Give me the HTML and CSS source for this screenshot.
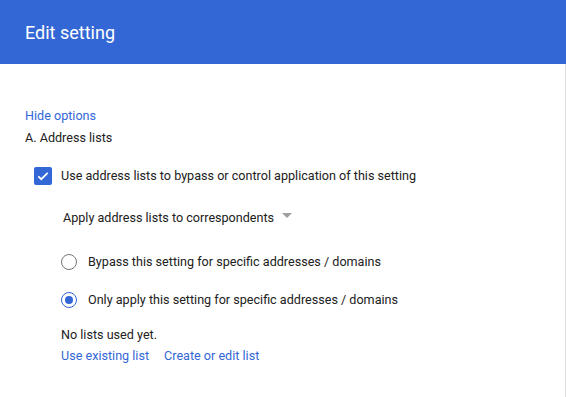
FILE: index.html
```html
<!DOCTYPE html>
<html lang="en">
<head>
  <meta charset="UTF-8">
  <title>Edit setting</title>
  <link rel="stylesheet" href="styles.css">
</head>
<body>
  <div class="header">
    <h1>Edit setting</h1>
  </div>

  <div class="content">
    <a class="link" href="#">Hide options</a>
    <div class="section-title">A. Address lists</div>

    <!-- checkbox -->
    <label class="check-row">
      <span class="checkbox">
        <svg width="14" height="14" viewBox="0 0 24 24"><path d="M4 12.5l5 5L20 6.5" fill="none" stroke="#fff" stroke-width="3"/></svg>
      </span>
      <span>Use address lists to bypass or control application of this setting</span>
    </label>

    <div class="dropdown">
      <span>Apply address lists to correspondents</span>
      <span class="caret"></span>
    </div>

    <!-- radio buttons -->
    <div class="radios">
      <label class="radio-row">
        <span class="radio"></span>
        <span>Bypass this setting for specific addresses / domains</span>
      </label>
      <label class="radio-row">
        <span class="radio on"></span>
        <span>Only apply this setting for specific addresses / domains</span>
      </label>
    </div>

    <div class="lists">
      <div>No lists used yet.</div>
      <div class="list-links">
        <a class="link" href="#">Use existing list</a>
        <a class="link" href="#">Create or edit list</a>
      </div>
    </div>
  </div>
</body>
</html>
```

FILE: styles.css
```css
body {
  margin: 0;
  font-family: Roboto, "Liberation Sans", sans-serif;
  font-size: 12.6px;
  color: #212121;
  background: #fff;
}

/* top bar */
.header {
  height: 64px;
  display: flex;
  align-items: center;
  padding: 0 25px;
  background-color: #3367d6;
}

.header h1 {
  margin: 0;
  font-size: 18px;
  font-weight: 400;
  color: #fff;
}

.content {
  padding: 42px 25px 20px;
  border-right: 1px solid #e0e0e0;
  min-height: 271px;
  line-height: 20px;
}

.link {
  color: #3367d6;
  text-decoration: none;
}

.section-title {
  margin-top: 2px;
}

.check-row {
  display: flex;
  align-items: center;
  gap: 9px;
  margin: 18px 0 0 9px;
}

.checkbox {
  width: 18px;
  height: 18px;
  border-radius: 2px;
  background-color: #3367d6;
  display: flex;
  align-items: center;
  justify-content: center;
}

.dropdown {
  display: flex;
  align-items: center;
  gap: 8px;
  margin: 22px 0 0 38px;
}

.caret {
  width: 0;
  height: 0;
  border-left: 5px solid transparent;
  border-right: 5px solid transparent;
  border-top: 5px solid #9e9e9e;
  margin-top: -5px;
}

.radios {
  display: flex;
  flex-direction: column;
  gap: 18px;
  margin: 24px 0 0 36px;
}

.radio-row {
  display: flex;
  align-items: center;
  gap: 11px;
}

.radio {
  box-sizing: border-box;
  width: 16px;
  height: 16px;
  border-radius: 50%;
  border: 1.5px solid #757575;
  display: flex;
  align-items: center;
  justify-content: center;
}

.radio.on {
  border-color: #3367d6;
}

.radio.on::after {
  content: "";
  width: 8px;
  height: 8px;
  border-radius: 50%;
  background-color: #3367d6;
}

.lists {
  margin: 14px 0 0 36px;
  line-height: 21px;
}

.list-links {
  display: flex;
  gap: 15px;
}
```
